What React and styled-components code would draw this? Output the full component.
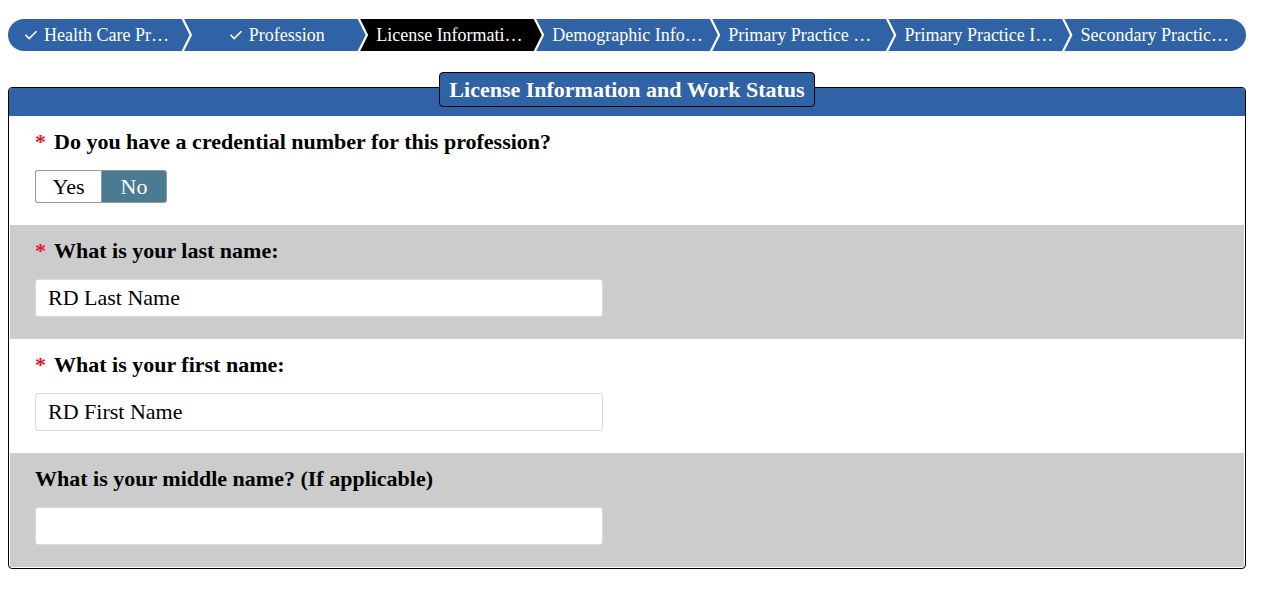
import styled, { createGlobalStyle } from "styled-components";

const GlobalStyle = createGlobalStyle`
  body {
    margin: 8px;
    font-family: "Liberation Serif", "Times New Roman", serif;
    color: #000;
    background: #fff;
  }
`;

const BLUE = "#3062a6";
const NOTCH = 8;

const Page = styled.div`
  padding-right: 10px;
`;

const Path = styled.ol`
  display: flex;
  list-style: none;
  margin: 11px 0 0;
  padding: 0;
  height: 32px;
`;

const Step = styled.li`
  flex: 1 1 0;
  min-width: 0;
  display: flex;
  align-items: center;
  justify-content: center;
  gap: 6px;
  padding: 0 12px 0 16px;
  background: ${(p) => (p.$current ? "#000" : BLUE)};
  color: #fff;
  font-size: 18px;
  white-space: nowrap;
  margin-left: ${(p) => (p.$first ? "0" : `-${NOTCH - 2.5}px`)};
  border-radius: ${(p) =>
    p.$first ? "16px 0 0 16px" : p.$last ? "0 16px 16px 0" : "0"};
  clip-path: ${(p) =>
    p.$first
      ? `polygon(0 0, calc(100% - ${NOTCH}px) 0, 100% 50%, calc(100% - ${NOTCH}px) 100%, 0 100%)`
      : p.$last
      ? `polygon(0 0, 100% 0, 100% 100%, 0 100%, ${NOTCH}px 50%)`
      : `polygon(0 0, calc(100% - ${NOTCH}px) 0, 100% 50%, calc(100% - ${NOTCH}px) 100%, 0 100%, ${NOTCH}px 50%)`};
`;

const StepLabel = styled.span`
  overflow: hidden;
  text-overflow: ellipsis;
  min-width: 0;
`;

const Check = styled.svg`
  flex: none;
  width: 14px;
  height: 10px;
`;

const Card = styled.section`
  margin-top: 36px;
  border: 1px solid #000;
  border-radius: 4px;
  padding: 0 1px 1px;
`;

const Band = styled.header`
  display: flex;
  justify-content: center;
  align-items: flex-start;
  height: 28px;
  margin: 0 -1px;
  background: ${BLUE};
  border-radius: 3px 3px 0 0;
`;

const Title = styled.h2`
  margin: -16px 0 0;
  padding: 0 9px;
  height: 33px;
  line-height: 33px;
  background: ${BLUE};
  border: 1px solid #000;
  border-radius: 4px;
  color: #fff;
  font-size: 22px;
  font-weight: bold;
  white-space: nowrap;
`;

const Row = styled.div`
  padding: 13px 25px 22px;
  background: ${(p) => (p.$shaded ? "#cccccc" : "#fff")};
`;

const Label = styled.label`
  display: block;
  margin-bottom: 16px;
  font-size: 22px;
  line-height: 25px;
  font-weight: bold;
`;

const Required = styled.span`
  color: #e8132b;
  margin-right: 8px;
`;

const Toggle = styled.div`
  display: flex;
  height: 33px;
  margin-top: 2px;
`;

const ToggleButton = styled.button`
  width: 66px;
  height: 33px;
  padding: 0;
  font-family: inherit;
  font-size: 22px;
  cursor: pointer;
  border: 1px solid #8f9aa2;
  background: ${(p) => (p.$active ? "#4a7b93" : "#fff")};
  color: ${(p) => (p.$active ? "#fff" : "#000")};
  border-radius: ${(p) => (p.$side === "left" ? "3px 0 0 3px" : "0 3px 3px 0")};
  ${(p) => (p.$side === "left" ? "border-right: none;" : "")}
`;

const TextInput = styled.input`
  display: block;
  box-sizing: border-box;
  width: 568px;
  height: 38px;
  padding: 0 12px;
  border: 1px solid #d9d9d9;
  border-radius: 3px;
  background: #fff;
  font-family: inherit;
  font-size: 22px;
  color: #000;
`;

const steps = [
  { label: "Health Care Professional", done: true },
  { label: "Profession", done: true },
  { label: "License Information and Work Status", current: true },
  { label: "Demographic Information" },
  { label: "Primary Practice Location" },
  { label: "Primary Practice Information" },
  { label: "Secondary Practice Location" },
];

const fields = [
  { label: "What is your last name:", value: "RD Last Name", required: true },
  { label: "What is your first name:", value: "RD First Name", required: true },
  { label: "What is your middle name? (If applicable)", value: "" },
];

const App = () => {
  return (
    <Page>
      <GlobalStyle />
      <Path>
        {steps.map((s, i) => (
          <Step
            key={s.label}
            $first={i === 0}
            $last={i === steps.length - 1}
            $current={s.current}
          >
            {s.done && (
              <Check viewBox="0 0 14 10">
                <path
                  d="M1.5 4.8 L5.2 8.5 L12.5 1.2"
                  fill="none"
                  stroke="#fff"
                  strokeWidth="1.6"
                />
              </Check>
            )}
            <StepLabel>{s.label}</StepLabel>
          </Step>
        ))}
      </Path>

      <Card>
        <Band>
          <Title>License Information and Work Status</Title>
        </Band>
        <Row>
          <Label>
            <Required>*</Required>Do you have a credential number for this
            profession?
          </Label>
          <Toggle>
            <ToggleButton $side="left">Yes</ToggleButton>
            <ToggleButton $side="right" $active>
              No
            </ToggleButton>
          </Toggle>
        </Row>
        {fields.map((f, i) => (
          <Row key={f.label} $shaded={i % 2 === 0}>
            <Label>
              {f.required && <Required>*</Required>}
              {f.label}
            </Label>
            <TextInput defaultValue={f.value} />
          </Row>
        ))}
      </Card>
    </Page>
  );
};

export default App;
